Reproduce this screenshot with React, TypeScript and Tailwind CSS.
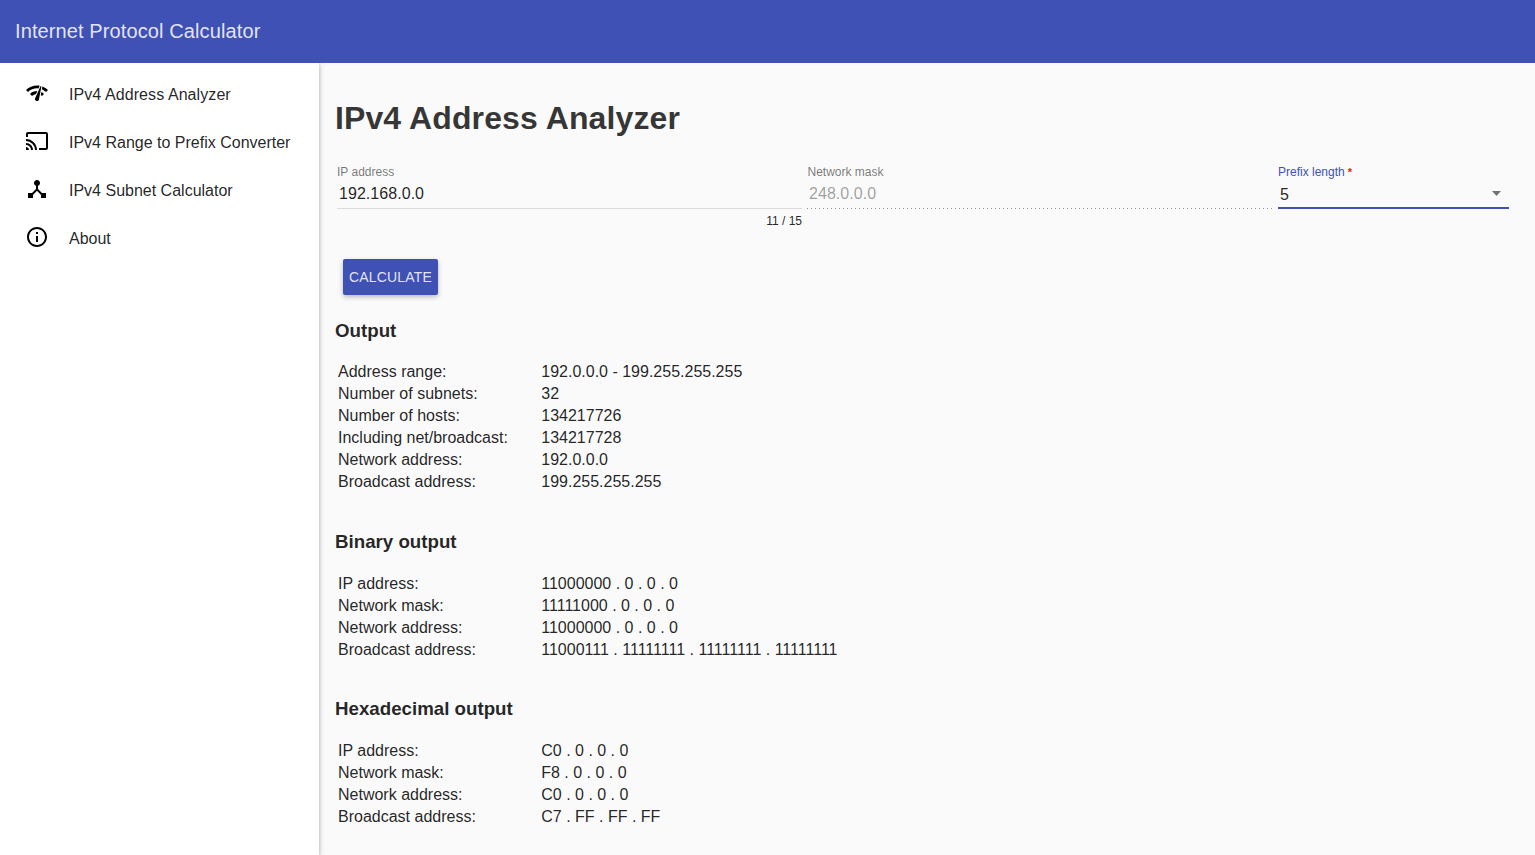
import { ReactNode } from "react";
import { MdNetworkCheck, MdOutlineCast, MdDeviceHub, MdInfoOutline } from "react-icons/md";

const nav: [ReactNode, string, string][] = [
  [<MdNetworkCheck size={24} />, "IPv4 Address Analyzer", "tracking-[0.08px]"],
  [<MdOutlineCast size={24} />, "IPv4 Range to Prefix Converter", ""],
  [<MdDeviceHub size={24} />, "IPv4 Subnet Calculator", ""],
  [<MdInfoOutline size={24} />, "About", ""],
];

const output = [
  ["Address range:", "192.0.0.0 - 199.255.255.255"],
  ["Number of subnets:", "32"],
  ["Number of hosts:", "134217726"],
  ["Including net/broadcast:", "134217728"],
  ["Network address:", "192.0.0.0"],
  ["Broadcast address:", "199.255.255.255"],
];
const binary = [
  ["IP address:", "11000000 . 0 . 0 . 0"],
  ["Network mask:", "11111000 . 0 . 0 . 0"],
  ["Network address:", "11000000 . 0 . 0 . 0"],
  ["Broadcast address:", "11000111 . 11111111 . 11111111 . 11111111"],
];
const hex = [
  ["IP address:", "C0 . 0 . 0 . 0"],
  ["Network mask:", "F8 . 0 . 0 . 0"],
  ["Network address:", "C0 . 0 . 0 . 0"],
  ["Broadcast address:", "C7 . FF . FF . FF"],
];

function Section({ title, rows, className }: { title: string; rows: string[][]; className: string }) {
  return (
    <section className={`flex flex-col ${className}`}>
      <h3 className="text-[18.72px] leading-[22px] font-bold">{title}</h3>
      <dl className="ml-[3px] grid auto-rows-[22px] grid-cols-[203.25px_auto] justify-start text-base leading-[22px] whitespace-nowrap">
        {rows.map(([label, value]) => (
          <div key={label} className="contents">
            <dt>{label}</dt>
            <dd>{value}</dd>
          </div>
        ))}
      </dl>
    </section>
  );
}

export default function App() {
  return (
    <div className="flex h-[855px] flex-col overflow-hidden bg-[#fafafa] font-['Liberation_Sans',Arial,sans-serif] text-black/87">
      <header className="relative z-20 flex h-[63px] shrink-0 items-center bg-[#3f51b5] px-[15px] pb-0.5 text-xl tracking-[0.11px] text-white/87">
        <h1>Internet Protocol Calculator</h1>
      </header>
      <div className="flex min-h-0 flex-1">
        <nav className="z-10 w-[319px] shrink-0 bg-white pt-2 shadow-[0_1px_5px_rgba(0,0,0,0.35)]">
          {nav.map(([icon, label, tracking]) => (
            <a key={label} className={`flex h-12 items-center gap-5 pl-[25px] text-base text-black/87 ${tracking}`}>
              <span className="-mt-1 text-black">{icon}</span>
              {label}
            </a>
          ))}
        </nav>
        <main className="flex-1 pl-4">
          <h2 className="pt-[37px] text-[32px] leading-[37px] font-bold tracking-[0.11px] text-black/80">IPv4 Address Analyzer</h2>
          <div className="mt-7 flex h-[66px] gap-[5px] pl-0.5">
            <div className="w-[465px]">
              <div className="text-xs leading-[14px] text-black/54">IP address</div>
              <div className="flex h-[30px] border-b border-black/12 pt-1.5 pl-0.5 text-base leading-[18px] tracking-[0.05px]">192.168.0.0</div>
              <div className="mt-[5px] text-right text-xs leading-[14px]">11 / 15</div>
            </div>
            <div className="w-[466px]">
              <div className="pl-[0.5px] text-xs leading-[14px] text-black/54">Network mask</div>
              <div className="flex h-[30px] bg-[linear-gradient(to_right,rgba(0,0,0,0.42)_25%,transparent_25%)] bg-[size:4px_1px] bg-bottom-left bg-repeat-x pt-1.5 pl-0.5 text-base leading-[18px] tracking-[0.05px] text-black/38">248.0.0.0</div>
            </div>
            <div className="w-[231px]">
              <div className="text-xs leading-[14px] text-[#3f51b5]">
                Prefix length<span className="pl-[3px] text-[11px] leading-none font-bold text-[#dd2c00]">*</span>
              </div>
              <div className="flex h-[30px] items-center justify-between border-b-2 border-[#3f51b5] pr-2 pl-0.5 text-base">
                <span className="pt-[3px]">5</span>
                <svg width="9" height="5" viewBox="0 0 9 5" className="text-black/54" fill="currentColor">
                  <path d="M0 0h9L4.5 5z" />
                </svg>
              </div>
            </div>
          </div>
          <button className="mt-7 ml-2 flex h-9 w-[95px] items-center justify-center rounded-[2px] bg-[#3f51b5] text-sm tracking-[0.15px] text-white/87 shadow-[0_2px_5px_rgba(0,0,0,0.26)]">CALCULATE</button>
          <Section title="Output" rows={output} className="mt-[25px] gap-[19px]" />
          <Section title="Binary output" rows={binary} className="mt-[38px] gap-5" />
          <Section title="Hexadecimal output" rows={hex} className="mt-[37px] gap-5" />
        </main>
      </div>
    </div>
  );
}
